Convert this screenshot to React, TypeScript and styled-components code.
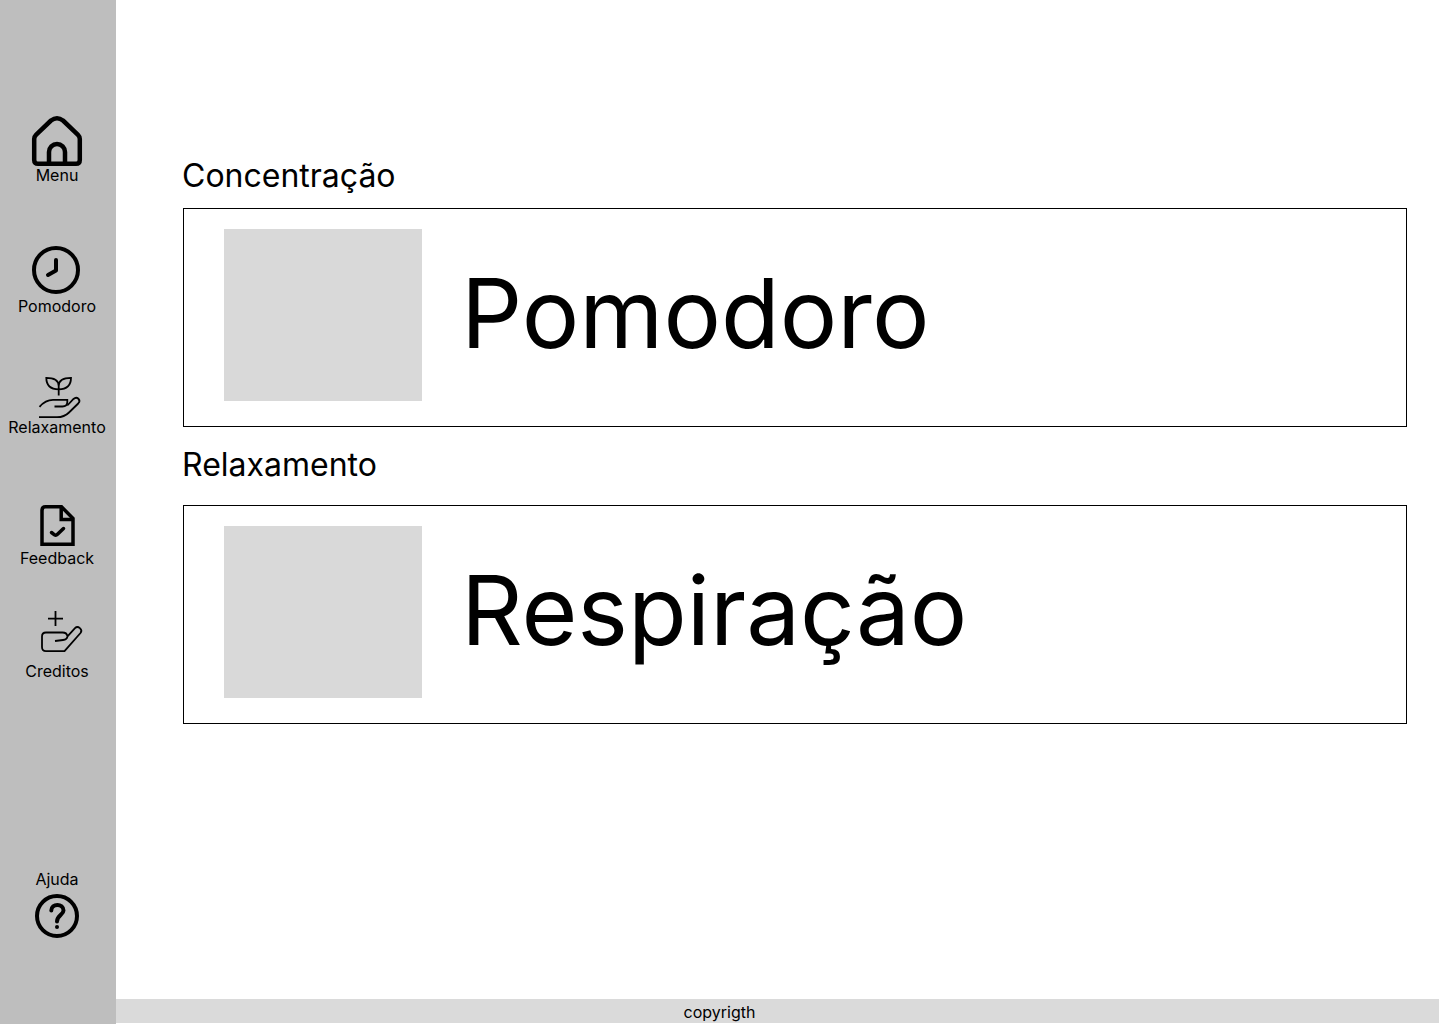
import React from "react";
import styled, { createGlobalStyle } from "styled-components";

const GlobalStyle = createGlobalStyle`
  *, *::before, *::after { box-sizing: border-box; }
  body {
    margin: 0;
    background: #ffffff;
    color: #000000;
    font-family: Inter, "Liberation Sans", sans-serif;
    font-size: 16px;
    line-height: 20px;
  }
`;

const Page = styled.div`
  display: flex;
  min-height: 100vh;
`;

const Sidebar = styled.nav`
  display: flex;
  flex-direction: column;
  align-items: center;
  flex: 0 0 116px;
  padding: 115px 2px 85px 0;
  background: #bebebe;
`;

const NavLink = styled.a<{ $space?: number }>`
  display: flex;
  flex-direction: column;
  align-items: center;
  margin-top: ${({ $space = 0 }) => $space}px;
  color: inherit;
  text-decoration: none;
`;

const HelpLink = styled(NavLink)`
  margin-top: auto;
`;

const Icon = styled.svg`
  display: block;
  width: 50px;
  height: 50px;
  overflow: visible;
  fill: none;
  stroke: #000000;
`;

const Content = styled.div`
  display: flex;
  flex-direction: column;
  flex: 1;
  min-width: 0;
`;

const Main = styled.main`
  display: flex;
  flex-direction: column;
  gap: 18px;
  flex: 1;
  padding: 156px 33px 40px 67px;
`;

const Section = styled.section<{ $gap: number }>`
  display: flex;
  flex-direction: column;
  gap: ${({ $gap }) => $gap}px;
`;

const Heading = styled.h2`
  margin: 0 0 0 -1px;
  font-size: 32px;
  font-weight: 400;
  line-height: 39px;
`;

const Card = styled.a`
  display: flex;
  align-items: center;
  gap: 39px;
  padding: 20px 40px 25px;
  border: 1px solid #000000;
  color: inherit;
  text-decoration: none;
`;

const Thumbnail = styled.div`
  flex: 0 0 198px;
  height: 172px;
  background: #d9d9d9;
`;

const CardTitle = styled.span`
  padding-bottom: 4px;
  font-size: 96px;
  font-weight: 400;
  line-height: 116px;
`;

const Footer = styled.footer`
  margin: 0 1px 1px 0;
  padding: 3px 116px 1px 0;
  background: #dadada;
  text-align: center;
`;

const HomeIcon = () => (
  <Icon viewBox="0 0 50 50" strokeWidth="4.500" strokeLinejoin="round" aria-hidden="true">
    <path d="M2.200 24Q2.200 21.500 4 19.800L19 5.500Q25 1 31 5.500L46 19.800Q47.800 21.500 47.800 24V45Q47.800 48.800 44 48.800H6Q2.200 48.800 2.200 45Z" />
    <path d="M17 49V37A8 8 0 0 1 33 37V49" />
  </Icon>
);

const ClockIcon = () => (
  <Icon viewBox="0 0 50 50" strokeWidth="4" strokeLinecap="round" strokeLinejoin="round" aria-hidden="true">
    <circle cx="24" cy="24" r="22" />
    <path d="M24 14V24.500L16 29" />
  </Icon>
);

const PlantIcon = () => (
  <Icon viewBox="0 0 50 50" strokeWidth="1.800" aria-hidden="true">
    <path d="M26.700 28.500V19C26.700 13 22 10.800 14.300 10.800C14.300 18 18 22.300 26.700 22.300C35.500 22.300 39 18 39 10.800C31.500 10.800 26.700 13 26.700 19" />
    <path d="M7.500 39.800C12 34.500 16 32.800 21 32.800H35.300V35C35.300 38 33.500 39.500 30.500 39.500H22.500" />
    <path d="M35.300 38.500L41.500 32C45 28.800 49.500 33 46.200 36.500L37 45.500C33.500 49 29.500 50.200 25 50.200H7" />
  </Icon>
);

const FeedbackIcon = () => (
  <Icon viewBox="0 0 50 50" strokeWidth="3.500" aria-hidden="true">
    <path d="M10 46.300V12.500Q10 8.800 13.500 8.800H29.500L41 20.500V46.300Z" />
    <path d="M29.200 9V21.500H41.500" />
    <path d="M19.500 34.500L22.500 36.800Q24 37.800 25.500 36.300L31.500 30.500" strokeLinecap="round" />
  </Icon>
);

const CreditsIcon = () => (
  <Icon viewBox="0 0 50 50" strokeWidth="1.800" strokeLinejoin="round" aria-hidden="true">
    <path d="M23.500 0V15M16 7.700H31" />
    <path d="M35.300 25C35 22.800 33.500 21.500 30.500 21.500H14Q10 21.500 10 25.500V36Q10 40.200 14 40.200H32.500L48.500 22C51.200 18.500 46 14.200 43 17.200L35.500 25.300C35.200 27.500 34 28.600 31 29L23 30" />
  </Icon>
);

const HelpIcon = () => (
  <Icon viewBox="0 0 50 50" strokeWidth="4" strokeLinecap="round" aria-hidden="true">
    <circle cx="25" cy="27" r="20" />
    <path d="M19.300 21.500C19.300 14 31.500 14 31.500 21.500C31.500 26 25 26 25 32.500" />
    <circle cx="25" cy="38" r="2" fill="#000000" stroke="none" />
  </Icon>
);

const navItems = [
  { label: "Menu", space: 0, Drawing: HomeIcon },
  { label: "Pomodoro", space: 61, Drawing: ClockIcon },
  { label: "Relaxamento", space: 51, Drawing: PlantIcon },
  { label: "Feedback", space: 61, Drawing: FeedbackIcon },
  { label: "Creditos", space: 43, Drawing: CreditsIcon },
];

const sections = [
  { heading: "Concentração", title: "Pomodoro", gap: 13 },
  { heading: "Relaxamento", title: "Respiração", gap: 21 },
];

export default function App() {
  return (
    <>
      <GlobalStyle />
      <Page>
        <Sidebar>
          {navItems.map(({ label, space, Drawing }) => (
            <NavLink key={label} href="#" $space={space}>
              <Drawing />
              <span>{label}</span>
            </NavLink>
          ))}
          <HelpLink href="#">
            <span>Ajuda</span>
            <HelpIcon />
          </HelpLink>
        </Sidebar>
        <Content>
          <Main>
            {sections.map(({ heading, title, gap }) => (
              <Section key={heading} $gap={gap}>
                <Heading>{heading}</Heading>
                <Card href="#">
                  <Thumbnail />
                  <CardTitle>{title}</CardTitle>
                </Card>
              </Section>
            ))}
          </Main>
          <Footer>copyrigth</Footer>
        </Content>
      </Page>
    </>
  );
}
